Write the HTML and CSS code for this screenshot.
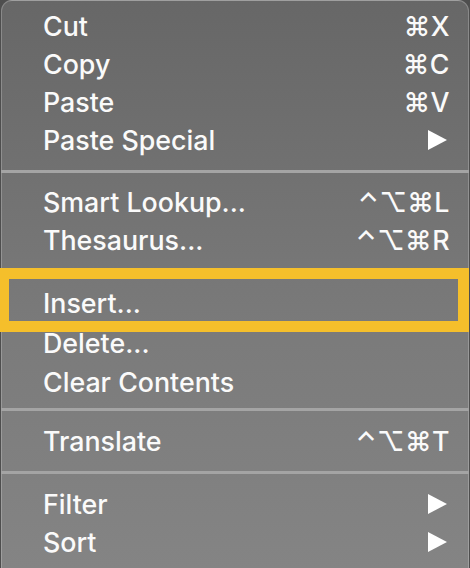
FILE: index.html
```html
<!DOCTYPE html>
<html lang="en">
<head>
<meta charset="utf-8">
<title>Context menu</title>
<link rel="stylesheet" href="styles.css">
</head>
<body>
<div class="menu">
  <div class="group first">
    <div class="item"><span class="label">Cut</span><span class="key">⌘X</span></div>
    <div class="item"><span class="label">Copy</span><span class="key">⌘C</span></div>
    <div class="item"><span class="label">Paste</span><span class="key">⌘V</span></div>
    <div class="item"><span class="label">Paste Special</span><svg class="arrow" viewBox="0 0 19 20"><polygon points="0,0 19,10 0,20" fill="#fff"/></svg></div>
  </div>
  <div class="sep sep-a"></div>
  <div class="group">
    <div class="item"><span class="label">Smart Lookup...</span><span class="key">⌃⌥⌘L</span></div>
    <div class="item"><span class="label">Thesaurus...</span><span class="key">⌃⌥⌘R</span></div>
    <div class="item item-insert"><span class="label">Insert...</span></div>
    <div class="item item-tall"><span class="label">Delete...</span></div>
    <div class="item"><span class="label">Clear Contents</span></div>
  </div>
  <div class="sep sep-b"></div>
  <div class="group">
    <div class="item"><span class="label">Translate</span><span class="key">⌃⌥⌘T</span></div>
  </div>
  <div class="sep sep-c"></div>
  <div class="group">
    <div class="item"><span class="label">Filter</span><svg class="arrow" viewBox="0 0 19 20"><polygon points="0,0 19,10 0,20" fill="#fff"/></svg></div>
    <div class="item"><span class="label">Sort</span><svg class="arrow" viewBox="0 0 19 20"><polygon points="0,0 19,10 0,20" fill="#fff"/></svg></div>
  </div>
  <div class="highlight"></div>
</div>
</body>
</html>
```

FILE: styles.css
```css
html, body {
  margin: 0;
  padding: 0;
  background: #4e4e4e;
  overflow: hidden;
}

.menu {
  position: relative;
  box-sizing: border-box;
  width: 468px;
  min-height: 568px;
  margin-left: 1px;
  border: 1px solid rgba(255, 255, 255, 0.22);
  border-bottom: none;
  border-radius: 11px 11px 0 0;
  background: linear-gradient(180deg, #676767 0%, #717171 30%, #7b7b7b 60%, #848484 100%);
  font-family: Inter, "Noto Sans", "DejaVu Sans", sans-serif;
  font-size: 26.8px;
  font-weight: 500;
  color: #fafafa;
}

.group {
  display: flex;
  flex-direction: column;
}

.group.first {
  padding-top: 6px;
}

.item {
  display: flex;
  align-items: center;
  justify-content: space-between;
  height: 38px;
  line-height: 38px;
  padding: 0 18px 0 41px;
}

.item-insert {
  margin-top: 24px;
  height: 40px;
}

.item-tall {
  height: 40px;
}

.key {
  font-family: Inter, "DejaVu Sans", sans-serif;
  letter-spacing: 0.5px;
}

.arrow {
  width: 19px;
  height: 20px;
  margin-right: 3px;
}

.sep {
  height: 3px;
  margin: 0 -1px;
  background: #a4a4a4;
}

.sep-a {
  margin-top: 11px;
  margin-bottom: 10px;
}

.sep-b {
  margin-top: 7px;
  margin-bottom: 11px;
}

.sep-c {
  margin-top: 11px;
  margin-bottom: 11px;
}

.highlight {
  position: absolute;
  top: 267px;
  left: -4px;
  width: 471px;
  height: 64px;
  box-sizing: border-box;
  border: 11px solid #f5bf2b;
}
```
